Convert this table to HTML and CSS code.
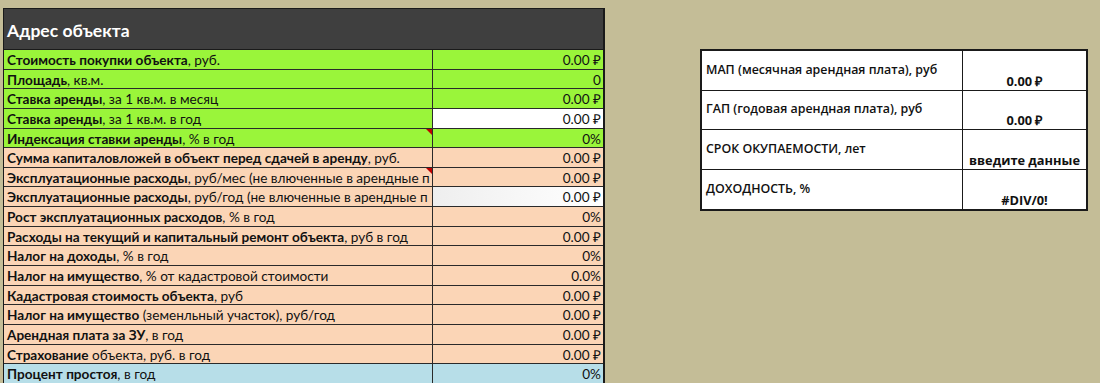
FILE: index.html
```html
<!DOCTYPE html>
<html lang="ru">
<head>
<meta charset="utf-8">
<title>Окупаемость объекта</title>
<link rel="stylesheet" href="styles.css">
</head>
<body>
<div class="page">
  <div class="sheet">
    <div class="sheet-head">Адрес объекта</div>
    <div class="row green"><div class="lbl"><b>Стоимость покупки объекта</b>, руб.</div><div class="val">0.00 ₽</div></div>
    <div class="row green"><div class="lbl"><b>Площадь</b>, кв.м.</div><div class="val">0</div></div>
    <div class="row green"><div class="lbl"><b>Ставка аренды</b>, за 1 кв.м. в месяц</div><div class="val">0.00 ₽</div></div>
    <div class="row green"><div class="lbl"><b>Ставка аренды</b>, за 1 кв.м. в год</div><div class="val white">0.00 ₽</div></div>
    <div class="row green"><div class="lbl note"><b>Индексация ставки аренды</b>, % в год</div><div class="val">0%</div></div>
    <div class="row peach"><div class="lbl"><b>Сумма капиталовложей в объект перед сдачей в аренду</b>, руб.</div><div class="val">0.00 ₽</div></div>
    <div class="row peach"><div class="lbl note"><b>Эксплуатационные расходы</b>, руб/мес (не влюченные в арендные п</div><div class="val">0.00 ₽</div></div>
    <div class="row peach"><div class="lbl"><b>Эксплуатационные расходы</b>, руб/год (не влюченные в арендные п</div><div class="val grey">0.00 ₽</div></div>
    <div class="row peach"><div class="lbl"><b>Рост эксплуатационных расходов</b>, % в год</div><div class="val">0%</div></div>
    <div class="row peach"><div class="lbl"><b>Расходы на текущий и капитальный ремонт объекта</b>, руб в год</div><div class="val">0.00 ₽</div></div>
    <div class="row peach"><div class="lbl"><b>Налог на доходы</b>, % в год</div><div class="val">0%</div></div>
    <div class="row peach"><div class="lbl"><b>Налог на имущество</b>, % от кадастровой стоимости</div><div class="val">0.0%</div></div>
    <div class="row peach"><div class="lbl"><b>Кадастровая стоимость объекта</b>, руб</div><div class="val">0.00 ₽</div></div>
    <div class="row peach"><div class="lbl"><b>Налог на имущество</b> (земенльный участок), руб/год</div><div class="val">0.00 ₽</div></div>
    <div class="row peach"><div class="lbl"><b>Арендная плата за ЗУ</b>, в год</div><div class="val">0.00 ₽</div></div>
    <div class="row peach"><div class="lbl"><b>Страхование</b> объекта, руб. в год</div><div class="val">0.00 ₽</div></div>
    <div class="row blue"><div class="lbl"><b>Процент простоя</b>, в год</div><div class="val">0%</div></div>
  </div>
  <div class="summary">
    <div class="srow"><div class="slbl">МАП (месячная арендная плата), руб</div><div class="sval">0.00 ₽</div></div>
    <div class="srow"><div class="slbl">ГАП (годовая арендная плата), руб</div><div class="sval">0.00 ₽</div></div>
    <div class="srow"><div class="slbl">СРОК ОКУПАЕМОСТИ, лет</div><div class="sval">введите данные</div></div>
    <div class="srow"><div class="slbl">ДОХОДНОСТЬ, %</div><div class="sval">#DIV/0!</div></div>
  </div>
</div>
</body>
</html>
```

FILE: styles.css
```css
* { box-sizing: border-box; }
html, body { margin: 0; padding: 0; }
body {
  background: #c4bd97;
  font-family: Lato, "Liberation Sans", sans-serif;
  font-size: 13.6px;
  color: #111;
  width: 1100px;
  height: 383px;
  overflow: hidden;
}
.page {
  display: flex;
  align-items: flex-start;
  padding: 8px 0 0 3px;
}
.sheet {
  width: 602px;
  border: 1px solid #1a1a1a;
  border-bottom: none;
  border-right-width: 2px;
}
.sheet-head {
  height: 41px;
  background: #3f3f3f;
  color: #fff;
  font-weight: 700;
  font-size: 17.5px;
  padding: 11px 0 0 3px;
  border-bottom: 1px solid #1a1a1a;
}
.row {
  display: grid;
  grid-template-columns: 429px 1fr;
  height: 19.65px;
  border-bottom: 1px solid #2a2a2a;
}
.green { background: #9af53a; }
.peach { background: #fbd5b6; }
.blue { background: #b7dee8; }
.lbl {
  position: relative;
  white-space: nowrap;
  overflow: hidden;
  padding: 3px 0 0 3px;
  border-right: 1px solid #2a2a2a;
  line-height: 15px;
}
.lbl b { font-weight: 700; }
.note::after {
  content: "";
  position: absolute;
  top: 0;
  right: 0;
  border-top: 6px solid #c00000;
  border-left: 6px solid transparent;
}
.val {
  text-align: right;
  padding: 3px 2px 0 0;
  line-height: 15px;
}
.val.white { background: #ffffff; }
.val.grey { background: linear-gradient(90deg, #eeeeee, #f7f7f7 50%, #ffffff); }
.summary {
  margin: 41px 0 0 95px;
  width: 388px;
  border: 2px solid #1a1a1a;
  background: #ffffff;
  font-family: "Open Sans", Lato, sans-serif;
  font-weight: 600;
  font-size: 12.4px;
}
.srow {
  display: grid;
  grid-template-columns: 261px 1fr;
  height: 39.5px;
  border-bottom: 1px solid #1a1a1a;
}
.srow:last-child { border-bottom: none; }
.slbl {
  display: flex;
  align-items: center;
  padding: 0 0 2px 4px;
  border-right: 1px solid #1a1a1a;
  white-space: nowrap;
}
.sval {
  display: flex;
  align-items: flex-end;
  justify-content: center;
  padding-bottom: 0;
  font-weight: 700;
  font-size: 12.8px;
}
```
